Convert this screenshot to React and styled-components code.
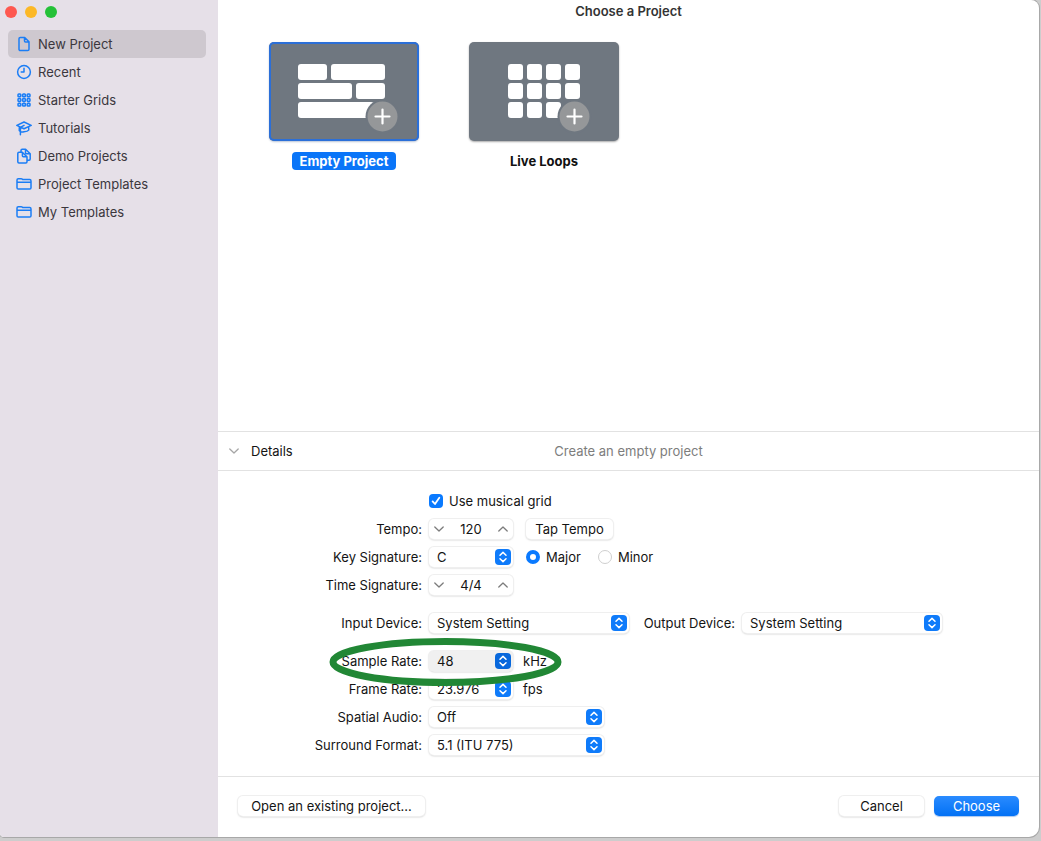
import React from "react";
import styled, { createGlobalStyle, css } from "styled-components";

const GlobalStyle = createGlobalStyle`
  *, *::before, *::after { box-sizing: border-box; }
  html { background: #cdcdcd; }
  body {
    margin: 0;
    color: #141414;
    font-family: Inter, "Liberation Sans", sans-serif;
    font-size: 13px;
    line-height: 16px;
  }
  button, input, select { font: inherit; color: inherit; margin: 0; }
`;

const Desktop = styled.div`
  display: flex;
  min-height: 100vh;
  padding: 0 2px 4px 0;
`;

const Window = styled.div`
  display: flex;
  flex: 1;
  overflow: hidden;
  background: #fff;
  border-radius: 0 8px 10px 4px;
  box-shadow: 0 0 0 1px #a8a8a8;
`;

const Sidebar = styled.aside`
  flex: 0 0 218px;
  padding: 6px 12px 0 8px;
  background: #e6e0e8;
`;

const Lights = styled.div`
  display: flex;
  gap: 8px;
  margin: 0 0 12px -3px;
`;

const Light = styled.button`
  width: 12px;
  height: 12px;
  padding: 0;
  border: 0;
  border-radius: 50%;
  background: ${(p) => p.$color};
`;

const NavItem = styled.a`
  display: flex;
  align-items: center;
  gap: 6px;
  height: 28px;
  padding-left: 8px;
  border-radius: 5px;
  color: #3b373d;
  text-decoration: none;
  background: ${(p) => (p.$active ? "#cec8cf" : "transparent")};
`;

const NavIcon = styled.svg`
  width: 16px;
  height: 16px;
  fill: none;
  stroke: #1b7df5;
  stroke-width: 1.5;
  stroke-linecap: round;
  stroke-linejoin: round;
`;

const Main = styled.main`
  display: flex;
  flex: 1;
  flex-direction: column;
  min-width: 0;
`;

const Title = styled.h1`
  margin: 0;
  padding-top: 3px;
  font-size: 13px;
  font-weight: 600;
  line-height: 16px;
  text-align: center;
  color: #333;
`;

const Gallery = styled.div`
  display: flex;
  flex: 1;
  align-items: flex-start;
  gap: 50px;
  padding: 23px 51px;
`;

const Tile = styled.button`
  display: flex;
  flex-direction: column;
  align-items: center;
  gap: 11px;
  width: 150px;
  padding: 0;
  border: 0;
  background: none;
`;

const Thumb = styled.svg`
  width: 150px;
  height: 99px;
  border-radius: 5px;
  background: #6f7780;
  box-shadow: ${(p) => (p.$selected ? "inset 0 0 0 2px #2b6fd8, 0 1px 2px #b9c4d6" : "0 1px 2px #aaa")};
`;

const TileName = styled.span`
  padding: 1px 8px;
  border-radius: 4px;
  font-weight: 700;
  color: ${(p) => (p.$selected ? "#fff" : "#111")};
  background: ${(p) => (p.$selected ? "#0a75f8" : "transparent")};
`;

const DetailsBar = styled.div`
  display: grid;
  grid-template-columns: 1fr auto 1fr;
  align-items: center;
  height: 40px;
  border: solid #e2e2e2;
  border-width: 1px 0;
`;

const Disclosure = styled.button`
  display: flex;
  align-items: center;
  gap: 12px;
  padding: 0 0 0 11px;
  border: 0;
  background: none;
`;

const Summary = styled.span`
  color: #7d7d7d;
`;

const Form = styled.form`
  display: flex;
  flex-direction: column;
  gap: 10px;
  padding: 16px 0 17px;
`;

const Group = styled.div`
  display: flex;
  flex-direction: column;
`;

const Row = styled.div`
  position: relative;
  display: flex;
  align-items: center;
  height: 28px;
`;

const Label = styled.label`
  flex: 0 0 auto;
  width: ${(p) => p.$width || 204}px;
  margin-right: 6px;
  text-align: right;
`;

const Check = styled.input`
  appearance: none;
  width: 14px;
  height: 14px;
  margin: 0 6px 0 211px;
  border-radius: 4px;
  background: #0a7aff url("data:image/svg+xml,%3Csvg xmlns='http://www.w3.org/2000/svg' viewBox='0 0 14 14'%3E%3Cpath d='M3.6 7.4 6 10l4.3-6.2' fill='none' stroke='white' stroke-width='1.8' stroke-linecap='round' stroke-linejoin='round'/%3E%3C/svg%3E");
`;

const raised = css`
  border: 0;
  border-radius: 5px;
  background: #fff;
  box-shadow: 0 0 0 1px #efefef, 0 1px 2px #bcbcbc;
`;

const Stepper = styled.div`
  ${raised}
  display: flex;
  align-items: center;
  width: 84px;
  height: 20px;
  margin: 0 13px 0 1px;
`;

const StepButton = styled.button`
  display: flex;
  justify-content: center;
  width: 20px;
  padding: 0;
  border: 0;
  background: none;
`;

const StepValue = styled.input`
  flex: 1;
  min-width: 0;
  padding: 0;
  border: 0;
  text-align: center;
  background: none;
`;

const PushButton = styled.button`
  ${raised}
  height: 20px;
  padding: 0;
  width: ${(p) => p.$width}px;
  ${(p) =>
    p.$primary &&
    css`
      color: #fff;
      background: linear-gradient(#2a8bff, #0271f5);
      box-shadow: 0 1px 1px #a9c6ee;
    `}
`;

const SelectBox = styled.span`
  position: relative;
  display: flex;
  width: ${(p) => p.$width}px;
  margin: 0 13px 0 1px;
`;

const NativeSelect = styled.select`
  ${raised}
  appearance: none;
  width: 100%;
  height: 20px;
  padding: 0 24px 0 8px;
  background: ${(p) => (p.$pressed ? "#f0f0f0" : "#fff")};
`;

const Arrows = styled.svg`
  position: absolute;
  top: 2px;
  right: 2px;
  width: 16px;
  height: 16px;
  border-radius: 4px;
  background: ${(p) => (p.$pressed ? "#0868dc" : "#0f7bfa")};
  fill: none;
  stroke: #fff;
  stroke-width: 1.5;
  stroke-linecap: round;
  stroke-linejoin: round;
  pointer-events: none;
`;

const RadioLabel = styled.label`
  display: flex;
  align-items: center;
  gap: 6px;
  margin-right: 17px;
`;

const Radio = styled.input`
  appearance: none;
  width: 14px;
  height: 14px;
  border: 1px solid #cfcfcf;
  border-radius: 50%;
  background: #fff;
  &:checked { border: 4px solid #0a7aff; }
`;

const Unit = styled.span`
  margin-left: -3px;
`;

const Highlight = styled.svg`
  position: absolute;
  z-index: 1;
  top: -10px;
  left: 111px;
  width: 234px;
  height: 50px;
  fill: none;
  stroke: #218735;
  stroke-width: 7;
  pointer-events: none;
`;

const Footer = styled.footer`
  display: flex;
  gap: 10px;
  padding: 19px 20px 21px;
  border-top: 1px solid #e2e2e2;
`;

const Spacer = styled.span`
  flex: 1;
`;

const folder = (
  <path d="M1 11.8V4C1 3.2 1.5 2.7 2.3 2.7h3c.8 0 1.1.9 1.8.9h6.6c.8 0 1.3.5 1.3 1.3v6.900c0 .8-.5 1.300-1.300 1.300H2.300c-.8 0-1.300-.5-1.300-1.300ZM1.200 6.200h13.600" />
);

const dots = [3.4, 8, 12.6];

const navItems = [
  ["New Project", <path d="M4.3 1.5h4.4L13 5.8v7.4a1.3 1.3 0 0 1-1.3 1.3H4.3A1.3 1.3 0 0 1 3 13.2V2.8a1.3 1.3 0 0 1 1.3-1.3M8.5 1.8v3.1a1 1 0 0 0 1 1h3.2" />],
  ["Recent", <><circle cx="8" cy="8" r="6.4" /><path d="M8 4.2V8H5.2" /></>],
  ["Starter Grids", <>{dots.flatMap((x) => dots.map((y) => <rect key={`${x}-${y}`} x={x - 1.4} y={y - 1.4} width="2.8" height="2.8" rx=".8" fill="#a9cdf8" />))}</>],
  ["Tutorials", <path d="M.8 5.400 8 2l7.200 3.400L8 8.800ZM3.300 7v3.700C4 11.800 6 12.200 8 11.800c2.400-.2 4.100-.9 4.700-1.700V7M8 5.400l-3.600 2v7.400" />],
  ["Demo Projects", <path d="M5 4.200V2.500C5 1.800 5.500 1.300 6.200 1.300h3.400l4.600 4.500v5.300c0 .7-.5 1.200-1.200 1.200h-2M9.500 1.500v3.300c0 .6.4 1 1 1H14M3 4.300h3.300L11 8.800v4.900c0 .7-.5 1.200-1.200 1.200H3c-.7 0-1.200-.5-1.200-1.200V5.500C1.800 4.800 2.300 4.300 3 4.300M6.400 4.600v3.100c0 .6.4 1 1 1h3.300" />],
  ["Project Templates", folder],
  ["My Templates", folder],
];

const trackBars = [
  [29, 22, 29], [62, 22, 54],
  [29, 41, 54], [87, 41, 29],
  [29, 60, 85],
];
const loopCells = [22, 41, 60].flatMap((y) => [39, 58, 77, 96].map((x) => [x, y, 15]));

function ProjectTile({ name, selected, shapes, plusX }) {
  const visible = shapes.filter(([x, y]) => !(x === 96 && y === 60));
  return (
    <Tile type="button" aria-pressed={!!selected}>
      <Thumb $selected={selected} viewBox="0 0 150 99" aria-hidden="true">
        {visible.map(([x, y, w]) => (
          <rect key={`${x}-${y}`} x={x} y={y} width={w} height="16" rx="3" fill="#fff" />
        ))}
        <circle cx={plusX} cy="74.5" r="17" fill="#6f7780" />
        <circle cx={plusX} cy="74.5" r="15" fill="#959799" />
        <path d={`M${plusX - 7} 74.5h14M${plusX} 67.5v14`} stroke="#fff" strokeWidth="2.2" strokeLinecap="round" />
      </Thumb>
      <TileName $selected={selected}>{name}</TileName>
    </Tile>
  );
}

function Chevron({ up, color = "#7c7c7c" }) {
  return (
    <svg width="10" height="6" viewBox="0 0 10 6" fill="none" stroke={color} strokeWidth="1.3" strokeLinecap="round" strokeLinejoin="round" aria-hidden="true">
      <path d={up ? "M.8 5 5 1l4.2 4" : "M.8 1 5 5l4.2-4"} />
    </svg>
  );
}

function Select({ id, width, value, pressed }) {
  return (
    <SelectBox $width={width}>
      <NativeSelect id={id} $pressed={pressed} defaultValue={value}>
        <option>{value}</option>
      </NativeSelect>
      <Arrows viewBox="0 0 16 16" $pressed={pressed} aria-hidden="true">
        <path d="M5 6.3 8 3.4l3 2.9M5 9.7l3 2.9 3-2.9" />
      </Arrows>
    </SelectBox>
  );
}

function StepField({ id, value }) {
  return (
    <Stepper>
      <StepButton type="button" aria-label="Decrease"><Chevron /></StepButton>
      <StepValue id={id} defaultValue={value} />
      <StepButton type="button" aria-label="Increase"><Chevron up /></StepButton>
    </Stepper>
  );
}

export default function App() {
  return (
    <Desktop>
      <GlobalStyle />
      <Window>
        <Sidebar>
          <Lights>
            <Light $color="#fe5850" aria-label="Close" />
            <Light $color="#fcb827" aria-label="Minimize" />
            <Light $color="#25c138" aria-label="Zoom" />
          </Lights>
          <nav>
            {navItems.map(([name, icon], i) => (
              <NavItem href="#" key={name} $active={i === 0}>
                <NavIcon viewBox="0 0 16 16" aria-hidden="true">{icon}</NavIcon>
                {name}
              </NavItem>
            ))}
          </nav>
        </Sidebar>
        <Main>
          <Title>Choose a Project</Title>
          <Gallery>
            <ProjectTile name="Empty Project" selected shapes={trackBars} plusX={113.5} />
            <ProjectTile name="Live Loops" shapes={loopCells} plusX={105.5} />
          </Gallery>
          <DetailsBar>
            <Disclosure type="button" aria-expanded="true">
              <Chevron color="#a6a6a6" />
              Details
            </Disclosure>
            <Summary>Create an empty project</Summary>
          </DetailsBar>
          <Form>
            <Group>
              <Row>
                <Check type="checkbox" id="grid" defaultChecked />
                <label htmlFor="grid">Use musical grid</label>
              </Row>
              <Row>
                <Label htmlFor="tempo">Tempo:</Label>
                <StepField id="tempo" value="120" />
                <PushButton type="button" $width={87}>Tap Tempo</PushButton>
              </Row>
              <Row>
                <Label htmlFor="key">Key Signature:</Label>
                <Select id="key" width={84} value="C" />
                <RadioLabel><Radio type="radio" name="mode" defaultChecked />Major</RadioLabel>
                <RadioLabel><Radio type="radio" name="mode" />Minor</RadioLabel>
              </Row>
              <Row>
                <Label htmlFor="time">Time Signature:</Label>
                <StepField id="time" value="4/4" />
              </Row>
            </Group>
            <Row>
              <Label htmlFor="input">Input Device:</Label>
              <Select id="input" width={200} value="System Setting" />
              <Label htmlFor="output" $width={93}>Output Device:</Label>
              <Select id="output" width={200} value="System Setting" />
            </Row>
            <Group>
              <Row>
                <Label htmlFor="sample">Sample Rate:</Label>
                <Select id="sample" width={84} value="48" pressed />
                <Unit>kHz</Unit>
                <Highlight viewBox="0 0 234 50" aria-hidden="true">
                  <ellipse cx="116.5" cy="25" rx="112.5" ry="20.5" />
                </Highlight>
              </Row>
              <Row>
                <Label htmlFor="frame">Frame Rate:</Label>
                <Select id="frame" width={84} value="23.976" />
                <Unit>fps</Unit>
              </Row>
              <Row>
                <Label htmlFor="spatial">Spatial Audio:</Label>
                <Select id="spatial" width={175} value="Off" />
              </Row>
              <Row>
                <Label htmlFor="surround">Surround Format:</Label>
                <Select id="surround" width={175} value="5.1 (ITU 775)" />
              </Row>
            </Group>
          </Form>
          <Footer>
            <PushButton type="button" $width={187}>Open an existing project...</PushButton>
            <Spacer />
            <PushButton type="button" $width={85}>Cancel</PushButton>
            <PushButton type="button" $width={85} $primary>Choose</PushButton>
          </Footer>
        </Main>
      </Window>
    </Desktop>
  );
}
